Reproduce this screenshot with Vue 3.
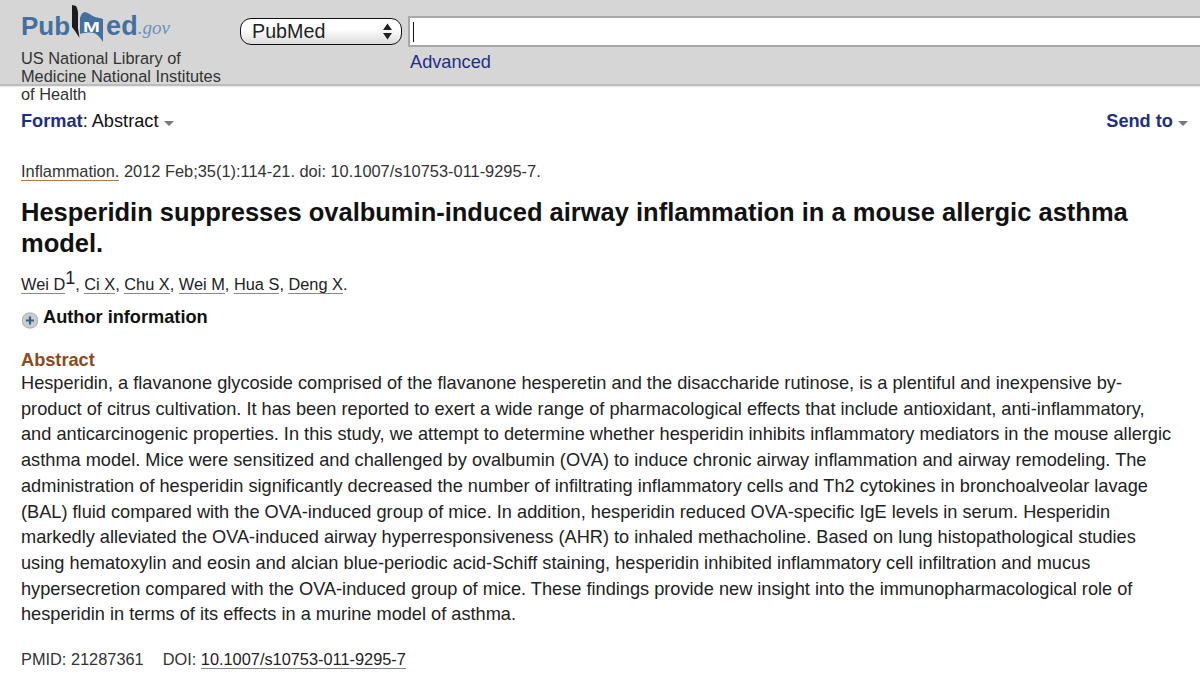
<template>
  <div class="page">
    <header class="masthead">
      <div class="brand">
        <div class="logo">
          <span class="logo-word">Pub</span>
          <span class="logo-book">
            <svg width="36" height="38" viewBox="0 0 36 38">
              <path d="M2 1 L6 2 C7 4 8 6 8 9 L8 24 L9.5 34 L5 27 L2 23 Z" fill="#1c1c1c" />
              <path d="M10 14 C11 10 13 8 15 8 C19 9 22 12 25 13 C28 14 31 14 33 15 L33 38 C30 33 26 28 20 28.5 C16 28.5 13 29 10 30 Z" fill="#44709f" />
            </svg>
            <span class="logo-m">M</span>
          </span>
          <span class="logo-word logo-ed">ed</span>
          <span class="logo-gov">.gov</span>
        </div>
        <p class="brand-text">US National Library of Medicine National Institutes of Health</p>
      </div>
      <div class="search">
        <div class="search-row">
          <div class="db-select">
            <span>PubMed</span>
            <svg width="9" height="17" viewBox="0 0 9 17">
              <path d="M4.5 0.5 L9 7 H0 Z M4.5 16.5 L0 10 H9 Z" fill="#222" />
            </svg>
          </div>
          <div class="search-input"><span class="caret"></span></div>
        </div>
        <a class="advanced">Advanced</a>
      </div>
    </header>

    <main class="content">
      <div class="toolbar">
        <div><span class="tool-label">Format</span>: Abstract <i class="tri"></i></div>
        <div><span class="tool-label">Send to</span> <i class="tri"></i></div>
      </div>

      <div class="cit"><a class="journal">Inflammation.</a> 2012 Feb;35(1):114-21. doi: 10.1007/s10753-011-9295-7.</div>
      <h1>{{ title }}</h1>

      <div class="authors">
        <template v-for="(a, i) in authors" :key="a">
          <a class="link">{{ a }}</a><sup v-if="i === 0">1</sup>{{ i < authors.length - 1 ? ', ' : '.' }}
        </template>
      </div>

      <div class="author-info">
        <svg width="18" height="18" viewBox="0 0 18 18">
          <rect x="1.5" y="2" width="15" height="15" rx="6.5" fill="#c9cdd1" stroke="#a9adb1" />
          <path d="M9 5.5 V13.5 M5 9.5 H13" stroke="#3f5f80" stroke-width="2.2" />
        </svg>
        <span>Author information</span>
      </div>

      <h3 class="abstract-head">Abstract</h3>
      <p class="abstract">{{ abstract }}</p>

      <div class="ids">
        <span>PMID: 21287361</span>
        <span>DOI: <a class="link">10.1007/s10753-011-9295-7</a></span>
      </div>
    </main>
  </div>
</template>

<script setup>
const title = 'Hesperidin suppresses ovalbumin-induced airway inflammation in a mouse allergic asthma model.'
const authors = ['Wei D', 'Ci X', 'Chu X', 'Wei M', 'Hua S', 'Deng X']
const abstract = 'Hesperidin, a flavanone glycoside comprised of the flavanone hesperetin and the disaccharide rutinose, is a plentiful and inexpensive by-product of citrus cultivation. It has been reported to exert a wide range of pharmacological effects that include antioxidant, anti-inflammatory, and anticarcinogenic properties. In this study, we attempt to determine whether hesperidin inhibits inflammatory mediators in the mouse allergic asthma model. Mice were sensitized and challenged by ovalbumin (OVA) to induce chronic airway inflammation and airway remodeling. The administration of hesperidin significantly decreased the number of infiltrating inflammatory cells and Th2 cytokines in bronchoalveolar lavage (BAL) fluid compared with the OVA-induced group of mice. In addition, hesperidin reduced OVA-specific IgE levels in serum. Hesperidin markedly alleviated the OVA-induced airway hyperresponsiveness (AHR) to inhaled methacholine. Based on lung histopathological studies using hematoxylin and eosin and alcian blue-periodic acid-Schiff staining, hesperidin inhibited inflammatory cell infiltration and mucus hypersecretion compared with the OVA-induced group of mice. These findings provide new insight into the immunopharmacological role of hesperidin in terms of its effects in a murine model of asthma.'
</script>

<style>
html, body {
  overflow: hidden;
  background: #fff;
}
</style>

<style scoped>
.page {
  height: 679px;
  overflow: hidden;
  font-family: "Liberation Sans", Arial, sans-serif;
  color: #1a1a1a;
}

.masthead {
  height: 84px;
  background: #d6d6d6;
  border-bottom: 2px solid #bdbdbd;
  box-shadow: 0 1px 1px rgba(0, 0, 0, 0.08);
  display: flex;
  padding-left: 21px;
}

.brand {
  width: 219px;
  flex-shrink: 0;
}

.logo {
  display: flex;
  align-items: flex-start;
  height: 46px;
  padding-top: 4px;
  box-sizing: border-box;
  color: #44709f;
}

.logo-word {
  font-size: 26px;
  font-weight: bold;
  line-height: 32px;
  margin-top: 6px;
}

.logo-ed {
  font-size: 27px;
}

.logo-book {
  position: relative;
  width: 36px;
  height: 38px;
  flex-shrink: 0;
}

.logo-m {
  position: absolute;
  left: 13px;
  top: 15px;
  color: #fff;
  font-weight: bold;
  font-size: 15px;
  line-height: 16px;
  transform: scaleX(1.35);
  transform-origin: left center;
}

.logo-gov {
  font-family: "Liberation Serif", serif;
  font-style: italic;
  font-size: 19px;
  line-height: 24px;
  margin-top: 12px;
  color: #6a93bb;
}

.brand-text {
  margin: 3px 0 0;
  width: 210px;
  font-size: 16.35px;
  line-height: 18px;
  color: #333;
}

.search {
  flex: 1;
  padding-top: 16px;
  min-width: 0;
}

.search-row {
  display: flex;
  align-items: center;
  gap: 6px;
}

.db-select {
  width: 162px;
  height: 27px;
  border: 1.5px solid #111;
  border-radius: 11px;
  background: linear-gradient(#ffffff, #ffffff 40%, #dcdcdc);
  display: flex;
  align-items: center;
  justify-content: space-between;
  padding: 0 9px 0 11px;
  box-sizing: border-box;
  font-size: 19.7px;
  color: #222;
}

.search-input {
  flex: 1;
  height: 27px;
  background: #fff;
  border: 2px solid #a8a8a8;
  border-right: none;
  display: flex;
  align-items: center;
  padding-left: 3px;
}

.caret {
  width: 1px;
  height: 20px;
  background: #111;
}

.advanced {
  display: block;
  margin: 4px 0 0 170px;
  font-size: 18.2px;
  line-height: 22px;
  color: #1f2f85;
}

.content {
  padding: 0 21px;
}

.toolbar {
  display: flex;
  justify-content: space-between;
  font-size: 18.2px;
  line-height: 22px;
  margin: 24px -9px 0 0;
  color: #111;
}

.tool-label {
  font-weight: bold;
  color: #1f2f85;
}

.tri {
  display: inline-block;
  width: 0;
  height: 0;
  border-left: 5px solid transparent;
  border-right: 5px solid transparent;
  border-top: 5px solid #777;
  vertical-align: 1px;
}

.cit {
  margin-top: 29px;
  font-size: 16.4px;
  line-height: 20px;
  color: #333;
}

.journal {
  border-bottom: 1px solid #b07a50;
  color: #333;
}

h1 {
  margin: 16px 0 0;
  font-size: 25.5px;
  line-height: 31px;
  font-weight: bold;
  color: #111;
}

.authors {
  margin-top: 13px;
  font-size: 16.35px;
  line-height: 24px;
  color: #222;
}

.authors sup {
  font-size: 18px;
  line-height: 0;
}

.link {
  border-bottom: 1px solid #888;
  color: #222;
}

.author-info {
  display: flex;
  align-items: center;
  gap: 4px;
  margin-top: 9px;
  font-size: 18.2px;
  line-height: 24px;
  font-weight: bold;
  color: #111;
}

.author-info svg {
  margin-top: 6px;
}

.abstract-head {
  margin: 20px 0 0;
  font-size: 18.2px;
  line-height: 22px;
  font-weight: bold;
  color: #8c4a21;
}

.abstract {
  margin: 0;
  font-size: 18.22px;
  line-height: 25.7px;
  color: #222;
}

.ids {
  display: flex;
  gap: 19px;
  margin-top: 21px;
  font-size: 16.35px;
  line-height: 20px;
  color: #333;
}
</style>
